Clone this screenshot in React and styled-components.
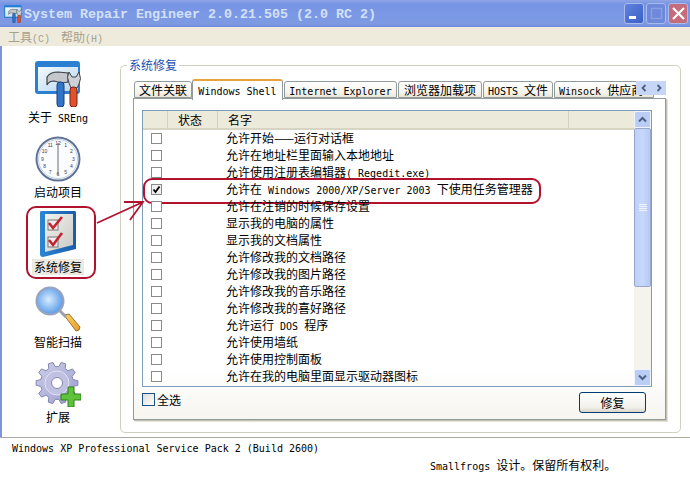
import React from "react";
import styled, { createGlobalStyle } from "styled-components";

const GlobalStyle = createGlobalStyle`
  html, body { margin: 0; padding: 0; background: #fff; }
  body { font-family: "Noto Sans CJK SC", "Liberation Sans", sans-serif; font-size: 12px; color: #000; }
`;

const Page = styled.div`
  position: relative;
  width: 690px;
  height: 483px;
  overflow: hidden;
  background: #fff;
  display: flex;
  flex-direction: column;
`;

const TitleBar = styled.div`
  height: 27px;
  flex: none;
  display: flex;
  align-items: center;
  padding: 0 2px 0 4px;
  background: linear-gradient(#8ea6e6 0, #7694e4 4px, #7b98e6 14px, #7e9ae2 24px, #6f8cd8 27px);
`;

const TitleText = styled.span`
  font: bold 13.33px "Liberation Mono", monospace;
  color: #d3e1f6;
  margin-left: 2px;
  padding-top: 2px;
  white-space: pre;
  flex: 1;
`;

const WinButtons = styled.div`
  display: flex;
  gap: 2px;
`;

const WinButton = styled.div`
  width: 20px;
  height: 21px;
  border-radius: 3px;
  border: 1px solid #a9bbec;
  box-sizing: border-box;
  display: flex;
  align-items: center;
  justify-content: center;
  background: ${(p) => p.$bg};
`;

const MenuBar = styled.div`
  height: 19px;
  flex: none;
  display: flex;
  gap: 11px;
  align-items: center;
  padding-left: 8px;
  background: #eeebdd;
  color: #a5a18c;
`;

const MenuItem = styled.span`
  white-space: pre;
  small { font: 10px "Liberation Mono", monospace; }
`;

const Main = styled.div`
  height: 391px;
  flex: none;
  display: flex;
  box-sizing: border-box;
  border-left: 2px solid #7f93e0;
`;

const Sidebar = styled.div`
  width: 118px;
  flex: none;
  padding-top: 13px;
  box-sizing: border-box;
`;

const NavItem = styled.div`
  position: relative;
  width: 112px;
  height: 75px;
  display: flex;
  flex-direction: column;
  align-items: center;
`;

const NavIcon = styled.div`
  height: 50px;
  display: flex;
  align-items: center;
  justify-content: center;
`;

const NavLabel = styled.div`
  height: 16px;
  line-height: 16px;
  padding: 0 2px;
  white-space: pre;
  background: ${(p) => (p.$selected ? "#ebe9e0" : "transparent")};
  position: relative;
  z-index: 1;
`;

const NavRing = styled.div`
  position: absolute;
  left: 24px;
  top: -3px;
  width: 70px;
  height: 73px;
  box-sizing: border-box;
  border: 2px solid #b3122f;
  border-radius: 10px;
`;

const GroupBox = styled.fieldset`
  margin: 11px 0 0 0;
  padding: 0;
  width: 561px;
  height: 376px;
  box-sizing: border-box;
  border: 1px solid #d0d0bf;
  border-radius: 5px;
  min-width: 0;
`;

const GroupLegend = styled.legend`
  margin-left: 6px;
  padding: 0 2px;
  color: #1c4fb0;
  line-height: 16px;
`;

const Tabs = styled.div`
  margin: 6px 0 0 12px;
  width: 533px;
  position: relative;
`;

const TabStrip = styled.div`
  position: relative;
  z-index: 1;
  height: 21px;
  margin-bottom: -2px;
  padding-left: 1px;
  display: flex;
  gap: 1px;
  overflow: hidden;
`;

const Tab = styled.div`
  flex: none;
  box-sizing: border-box;
  width: ${(p) => p.$w}px;
  margin-top: ${(p) => (p.$active ? 0 : 2)}px;
  margin-left: ${(p) => (p.$active ? -1 : 0)}px;
  height: ${(p) => (p.$active ? 21 : 17)}px;
  line-height: ${(p) => (p.$active ? 17 : 16)}px;
  padding: 0 ${(p) => (p.$pad ? 4 : 0)}px;
  text-align: ${(p) => (p.$pad ? "left" : "center")};
  white-space: pre;
  overflow: hidden;
  border: 1px solid #919b9c;
  border-bottom: ${(p) => (p.$active ? "none" : "1px solid #919b9c")};
  border-top: ${(p) => (p.$active ? "2px solid #e8a13c" : "1px solid #919b9c")};
  border-radius: 3px 3px 0 0;
  background: ${(p) => (p.$active ? "#fff" : "linear-gradient(#fff, #f5f3ea 70%, #e9e6d8)")};
`;

const TabArrows = styled.div`
  position: absolute;
  z-index: 2;
  right: 0;
  top: 2px;
  width: 30px;
  height: 14px;
  display: flex;
  align-items: center;
  justify-content: space-around;
  background: #c7d6f4;
`;

const TabPanel = styled.div`
  height: 322px;
  box-sizing: border-box;
  border: 1px solid #919b9c;
  box-shadow: 1px 1px 0 #c4c2b4, 2px 2px 0 #e6e4da;
  background: linear-gradient(#fff, #fff 85%, #f6f5ef);
  padding: 11px 13px 0 8px;
`;

const List = styled.div`
  height: 277px;
  box-sizing: border-box;
  border: 1px solid #7f9db9;
  display: flex;
`;

const ListBody = styled.div`
  flex: 1;
  min-width: 0;
`;

const ListHead = styled.div`
  height: 19px;
  box-sizing: border-box;
  display: grid;
  grid-template-columns: 25px 50px 351px 1fr;
  background: #ebeadb;
  border-bottom: 2px solid #d8d4c4;
`;

const HeadCell = styled.div`
  line-height: 17px;
  padding-left: 10px;
  box-sizing: border-box;
  white-space: pre;
  position: relative;
  border-right: ${(p) => (p.$last ? "none" : "1px solid #d4d0c0")};
`;

const Row = styled.div`
  position: relative;
  height: 17px;
  display: grid;
  grid-template-columns: 83px 1fr;
  align-items: center;
  white-space: pre;
  line-height: 15px;
`;

const Highlight = styled.div`
  position: absolute;
  left: 0;
  top: -3px;
  width: 398px;
  height: 26px;
  box-sizing: border-box;
  border: 2px solid #b3122f;
  border-radius: 9px;
  background: #fff;
`;

const RowCheckCell = styled.div`
  position: relative;
  z-index: 1;
  padding-left: 8px;
  display: flex;
`;

const RowText = styled.div`
  position: relative;
  z-index: 1;
  padding-bottom: 2px;
`;

const Check = styled.div`
  width: 11px;
  height: 11px;
  box-sizing: border-box;
  border: 1px solid #8a8a8a;
  background: ${(p) => (p.$on ? "#f0f0f0" : "#fff")};
  display: flex;
  align-items: center;
  justify-content: center;
`;

const ScrollBar = styled.div`
  width: 17px;
  flex: none;
  display: flex;
  flex-direction: column;
  background: #f4f3ee;
`;

const ScrollButton = styled.div`
  height: 17px;
  flex: none;
  box-sizing: border-box;
  border: 1px solid #eef3fe;
  border-radius: 2px;
  background: #bccdf5;
  display: flex;
  align-items: center;
  justify-content: center;
`;

const ScrollThumb = styled.div`
  height: 159px;
  box-sizing: border-box;
  border: 1px solid #98a8cc;
  border-radius: 2px;
  background: linear-gradient(90deg, #bed0f8, #c8d8fb 50%, #b6c9f4);
  display: flex;
  flex-direction: column;
  align-items: center;
  justify-content: center;
  gap: 1px;
  span { width: 8px; height: 1px; background: #eef3fe; }
`;

const ScrollTrack = styled.div`
  flex: 1;
`;

const PanelFooter = styled.div`
  display: flex;
  justify-content: space-between;
  align-items: flex-start;
  padding: 6px 6px 0 0;
`;

const SelectAll = styled.div`
  display: flex;
  align-items: center;
  gap: 2px;
  line-height: 13px;
`;

const SelectBox = styled.div`
  width: 13px;
  height: 13px;
  box-sizing: border-box;
  border: 1px solid #1c5180;
  background: linear-gradient(135deg, #dcdcd6, #fff);
`;

const RepairButton = styled.div`
  width: 67px;
  height: 21px;
  margin-top: -1px;
  box-sizing: border-box;
  border: 1px solid #003c74;
  border-radius: 3px;
  background: linear-gradient(#fff, #f2f1ea 75%, #d9d6ca);
  text-align: center;
  line-height: 19px;
`;

const StatusArea = styled.div`
  flex: 1;
  border-top: 1px solid #a9a9a4;
`;

const StatusLine = styled.div`
  height: 18px;
  line-height: 18px;
  white-space: pre;
  padding-left: ${(p) => p.$indent}px;
`;

const Latin = styled.span`
  font: ${(p) => (p.$bold ? "bold " : "")}10px "DejaVu Sans Mono", monospace;
`;

const ArrowOverlay = styled.svg`
  position: absolute;
  left: 0;
  top: 0;
  pointer-events: none;
`;

// latin runs are 6px a char in the original, cjk 12px
function Mixed({ text }) {
  return text.split(/([\x00-\x7f]+)/).map((part, i) =>
    /^[\x00-\x7f]+$/.test(part) ? <Latin key={i}>{part}</Latin> : part
  );
}

function ToolIcon({ size = 46 }) {
  return (
    <svg width={size} height={size} viewBox="0 0 46 46">
      <defs>
        <linearGradient id="winFill" x1="0" y1="0" x2="1" y2="1">
          <stop offset="0" stopColor="#f4fafe" />
          <stop offset="1" stopColor="#b5d5ee" />
        </linearGradient>
      </defs>
      <rect x="0" y="0" width="45" height="33" rx="3" fill="#2b80d2" />
      <rect x="3" y="6" width="40" height="24" fill="url(#winFill)" />
      <path d="M12 16Q15 11 23 11L33 12L33 21L27 22L19 20Q14 20 12 24Z" fill="#c4c8cc" stroke="#3c4248" strokeWidth="1.2" />
      <rect x="22" y="21" width="7" height="25" rx="3" fill="#3274c6" stroke="#1d3f7c" />
      <path d="M34 11L37 16L41 16L44 11Q47 18 44 23L42 27L36 27L34 22Q31 16 34 11Z" fill="#cdd1d5" stroke="#3c4248" />
      <rect x="35" y="26" width="7" height="20" rx="3" fill="#e2532b" stroke="#7c2212" />
    </svg>
  );
}

function ClockIcon() {
  const marks = [12, 1, 2, 3, 4, 5, 6, 7, 8, 9, 10, 11];
  return (
    <svg width="46" height="46" viewBox="0 0 46 46">
      <circle cx="23" cy="23" r="21.5" fill="#fbfcfe" stroke="#5f7398" strokeWidth="2" />
      <circle cx="23" cy="23" r="19.5" fill="none" stroke="#c3cede" />
      {marks.map((m, i) => {
        const a = (i * Math.PI) / 6;
        return (
          <text key={m} x={23 + 15.5 * Math.sin(a)} y={24.7 - 15.5 * Math.cos(a)} fontSize="5" textAnchor="middle" fill="#30405e" fontFamily="Liberation Sans">
            {m}
          </text>
        );
      })}
      <line x1="23" y1="7" x2="23" y2="39" stroke="#6a6a6a" strokeWidth="1" />
    </svg>
  );
}

function ChecklistIcon() {
  return (
    <svg width="46" height="46" viewBox="0 0 46 46">
      <defs>
        <linearGradient id="sheet" x1="0" y1="0" x2="1" y2="1">
          <stop offset="0" stopColor="#f2f2ee" />
          <stop offset="1" stopColor="#c9c9c6" />
        </linearGradient>
        <linearGradient id="sheetEdge" x1="0" y1="0" x2="1" y2="0">
          <stop offset="0" stopColor="#2b86d4" />
          <stop offset="1" stopColor="#1a5cab" />
        </linearGradient>
      </defs>
      <path d="M6 0H40Q41 0 41 2V38L8 46Q5 46 5 43V2Q5 0 6 0Z" fill="url(#sheetEdge)" />
      <path d="M10 3H38V34L10 41Z" fill="url(#sheet)" />
      <rect x="13" y="9" width="10" height="10" fill="#eee" stroke="#777" />
      <rect x="13" y="26" width="10" height="10" fill="#eee" stroke="#777" />
      <path d="M14 12L18 17L27 6" fill="none" stroke="#c8202c" strokeWidth="2.6" />
      <path d="M14 29L18 34L27 22" fill="none" stroke="#c8202c" strokeWidth="2.6" />
    </svg>
  );
}

function LensIcon() {
  return (
    <svg width="46" height="46" viewBox="0 0 46 46">
      <defs>
        <radialGradient id="lens" cx="0.45" cy="0.45" r="0.6">
          <stop offset="0" stopColor="#d8ecfc" />
          <stop offset="1" stopColor="#4d94e8" />
        </radialGradient>
        <linearGradient id="grip" x1="0" y1="0" x2="1" y2="1">
          <stop offset="0" stopColor="#f8d860" />
          <stop offset="1" stopColor="#e89a30" />
        </linearGradient>
      </defs>
      <path d="M29 29L34 28L45 41Q45 45 41 45Z" fill="url(#grip)" stroke="#a0702a" />
      <line x1="24" y1="24" x2="31" y2="31" stroke="#9aa0b4" strokeWidth="3" />
      <circle cx="15" cy="15" r="13.5" fill="url(#lens)" stroke="#9ba2bc" strokeWidth="2" />
    </svg>
  );
}

function gearPath(cx, cy, outer, inner, teeth) {
  const pts = [];
  const step = (Math.PI * 2) / teeth;
  for (let i = 0; i < teeth; i++) {
    const a = i * step;
    [[-0.3, inner], [-0.16, outer], [0.16, outer], [0.3, inner]].forEach(([f, r]) => {
      const t = a + f * step * 1.1;
      pts.push(`${(cx + r * Math.cos(t)).toFixed(1)} ${(cy + r * Math.sin(t)).toFixed(1)}`);
    });
  }
  return "M" + pts.join("L") + "Z";
}

function GearIcon() {
  return (
    <svg width="46" height="46" viewBox="0 0 46 46">
      <defs>
        <linearGradient id="gear" x1="0" y1="0" x2="1" y2="1">
          <stop offset="0" stopColor="#cfd0ea" />
          <stop offset="1" stopColor="#9a9ccc" />
        </linearGradient>
      </defs>
      <path d={gearPath(22, 22, 21, 16.5, 10)} fill="url(#gear)" stroke="#8487b0" />
      <circle cx="22" cy="22" r="12" fill="#c0c1e2" stroke="#e2e3f4" />
      <circle cx="22" cy="22" r="5.5" fill="#fff" stroke="#8487b0" />
      <path d="M33 26h6v7h7v6h-7v7h-6v-7h-7v-6h7z" fill="#5fc23a" stroke="#2f7f1e" />
    </svg>
  );
}

const Chevron = ({ dir }) => (
  <svg width="9" height="7" viewBox="0 0 9 7">
    <path d={dir === "up" ? "M1 5.5L4.5 2L8 5.5" : "M1 1.5L4.5 5L8 1.5"} fill="none" stroke="#4d6185" strokeWidth="2" />
  </svg>
);

const Caret = ({ dir }) => (
  <svg width="6" height="8" viewBox="0 0 6 8">
    <path d={dir === "left" ? "M4.5 1L1.5 4L4.5 7" : "M1.5 1L4.5 4L1.5 7"} fill="none" stroke="#4d6185" strokeWidth="1.8" />
  </svg>
);

const nav = [
  { label: "关于 SREng", icon: <ToolIcon /> },
  { label: "启动项目", icon: <ClockIcon /> },
  { label: "系统修复", icon: <ChecklistIcon />, selected: true },
  { label: "智能扫描", icon: <LensIcon /> },
  { label: "扩展", icon: <GearIcon /> },
];

const tabs = [
  { label: "文件关联", w: 58 },
  { label: "Windows Shell", w: 91, active: true },
  { label: "Internet Explorer", w: 113 },
  { label: "浏览器加载项", w: 84 },
  { label: "HOSTS 文件", w: 70 },
  { label: "Winsock 供应商", w: 100, pad: true },
];

const rows = [
  "允许开始——运行对话框",
  "允许在地址栏里面输入本地地址",
  "允许使用注册表编辑器( Regedit.exe)",
  "允许在 Windows 2000/XP/Server 2003 下使用任务管理器",
  "允许在注销的时候保存设置",
  "显示我的电脑的属性",
  "显示我的文档属性",
  "允许修改我的文档路径",
  "允许修改我的图片路径",
  "允许修改我的音乐路径",
  "允许修改我的喜好路径",
  "允许运行 DOS 程序",
  "允许使用墙纸",
  "允许使用控制面板",
  "允许在我的电脑里面显示驱动器图标",
];

export default function App() {
  return (
    <Page>
      <GlobalStyle />
      <TitleBar>
        <ToolIcon size={18} />
        <TitleText>System Repair Engineer 2.0.21.505 (2.0 RC 2)</TitleText>
        <WinButtons>
          <WinButton $bg="linear-gradient(135deg, #5f83de, #3b60c4)">
            <svg width="17" height="17" viewBox="0 0 17 17">
              <rect x="3" y="11" width="7" height="3" fill="#fff" />
            </svg>
          </WinButton>
          <WinButton $bg="#6f89da">
            <svg width="17" height="17" viewBox="0 0 17 17">
              <rect x="3.5" y="3.5" width="10" height="10" fill="none" stroke="#8aa0e2" strokeWidth="1.4" />
            </svg>
          </WinButton>
          <WinButton $bg="#c46c7c">
            <svg width="17" height="17" viewBox="0 0 17 17">
              <path d="M3 3L14 14M14 3L3 14" stroke="#fff" strokeWidth="2.2" />
            </svg>
          </WinButton>
        </WinButtons>
      </TitleBar>
      <MenuBar>
        <MenuItem>工具<small>(C)</small></MenuItem>
        <MenuItem>帮助<small>(H)</small></MenuItem>
      </MenuBar>
      <Main>
        <Sidebar>
          {nav.map((item) => (
            <NavItem key={item.label}>
              {item.selected && <NavRing />}
              <NavIcon>{item.icon}</NavIcon>
              <NavLabel $selected={item.selected}>
                <Mixed text={item.label} />
              </NavLabel>
            </NavItem>
          ))}
        </Sidebar>
        <GroupBox>
          <GroupLegend>系统修复</GroupLegend>
          <Tabs>
            <TabStrip>
              {tabs.map((t) => (
                <Tab key={t.label} $w={t.w} $active={t.active} $pad={t.pad}>
                  <Mixed text={t.label} />
                </Tab>
              ))}
            </TabStrip>
            <TabArrows>
              <Caret dir="left" />
              <Caret dir="right" />
            </TabArrows>
            <TabPanel>
              <List>
                <ListBody>
                  <ListHead>
                    <HeadCell />
                    <HeadCell>状态</HeadCell>
                    <HeadCell>名字</HeadCell>
                    <HeadCell $last />
                  </ListHead>
                  {rows.map((text, i) => (
                    <Row key={text}>
                      {i === 3 && <Highlight />}
                      <RowCheckCell>
                        <Check $on={i === 3}>
                          {i === 3 && (
                            <svg width="9" height="9" viewBox="0 0 9 9">
                              <path d="M1.5 4.5L3.5 7L7.5 1.5" fill="none" stroke="#000" strokeWidth="1.8" />
                            </svg>
                          )}
                        </Check>
                      </RowCheckCell>
                      <RowText>
                        <Mixed text={text} />
                      </RowText>
                    </Row>
                  ))}
                </ListBody>
                <ScrollBar>
                  <ScrollButton>
                    <Chevron dir="up" />
                  </ScrollButton>
                  <ScrollThumb>
                    <span />
                    <span />
                    <span />
                    <span />
                  </ScrollThumb>
                  <ScrollTrack />
                  <ScrollButton>
                    <Chevron dir="down" />
                  </ScrollButton>
                </ScrollBar>
              </List>
              <PanelFooter>
                <SelectAll>
                  <SelectBox />
                  全选
                </SelectAll>
                <RepairButton>修复</RepairButton>
              </PanelFooter>
            </TabPanel>
          </Tabs>
        </GroupBox>
      </Main>
      <StatusArea>
        <StatusLine $indent={12}>
          <Mixed text="Windows XP Professional Service Pack 2 (Build 2600)" />
        </StatusLine>
        <StatusLine $indent={430}>
          <Mixed text="Smallfrogs 设计。保留所有权利。" />
        </StatusLine>
      </StatusArea>
      <ArrowOverlay width="690" height="483" viewBox="0 0 690 483">
        <path d="M97 223L143 202M124 202H143L130 220" fill="none" stroke="#b3122f" strokeWidth="1.8" />
      </ArrowOverlay>
    </Page>
  );
}
